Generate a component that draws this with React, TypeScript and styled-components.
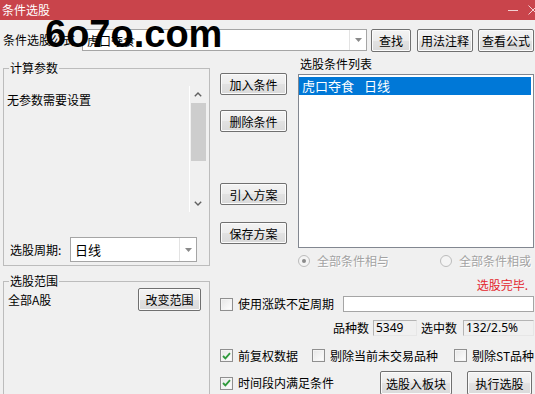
import React from "react";
import styled, { createGlobalStyle } from "styled-components";

const GlobalStyle = createGlobalStyle`
  html, body {
    margin: 0;
    padding: 0;
    background: #f0f0f0;
  }
  body {
    font-family: "Noto Sans CJK SC", "Noto Sans", sans-serif;
    font-size: 12px;
    color: #000;
  }
  * {
    box-sizing: border-box;
  }
`;

const Window = styled.div`
  position: relative;
  width: 535px;
  height: 394px;
  overflow: hidden;
  background: #f0f0f0;
`;

const TitleBar = styled.div`
  height: 20px;
  background: #c9444b;
  color: #fff;
  display: flex;
  align-items: center;
  padding-left: 2px;
  font-size: 12px;
`;

const TitleText = styled.span`
  flex: 1;
  line-height: 20px;
`;

const Minimize = styled.span`
  flex-shrink: 0;
  width: 10px;
  height: 1px;
  margin-right: 10px;
  background: rgba(255, 255, 255, 0.75);
`;

const CloseIcon = styled.svg`
  flex-shrink: 0;
  margin-right: -3px;
`;

const TopRow = styled.div`
  display: flex;
  align-items: center;
  height: 24px;
  margin-top: 8px;
  padding-left: 3px;
`;

const FormulaLabel = styled.span`
  width: 79px;
  line-height: 16px;
`;

const Combo = styled.div<{ $w: number; $h: number }>`
  width: ${(p) => p.$w}px;
  height: ${(p) => p.$h}px;
  display: flex;
  flex-shrink: 0;
  background: #fff;
  border: 1px solid #a5a5a5;
`;

const ComboText = styled.div<{ $size?: number }>`
  flex: 1;
  display: flex;
  align-items: center;
  padding-left: 4px;
  font-size: ${(p) => p.$size ?? 12}px;
`;

const ComboArrow = styled.div`
  width: 17px;
  display: flex;
  align-items: center;
  justify-content: center;
  border-left: 1px solid #e3e3e3;
`;

const Button = styled.button<{ $w: number; $h?: number; $mt?: number; $ml?: number }>`
  width: ${(p) => p.$w}px;
  height: ${(p) => p.$h ?? 22}px;
  margin-top: ${(p) => p.$mt ?? 0}px;
  margin-left: ${(p) => p.$ml ?? 0}px;
  flex-shrink: 0;
  padding: 0;
  font-family: inherit;
  font-size: 12px;
  color: #000;
  border: 1px solid #707070;
  border-radius: 2px;
  background: linear-gradient(#f3f3f3, #ececec 50%, #e2e2e2 51%, #dadada);
  box-shadow: inset 0 0 0 1px #fbfbfb;
`;

const Watermark = styled.div`
  position: absolute;
  left: 45px;
  top: 15px;
  font-family: "Liberation Sans", Arial, sans-serif;
  font-weight: bold;
  font-size: 38px;
  line-height: 38px;
  color: #000;
  pointer-events: none;
`;

const Body = styled.div`
  display: flex;
  margin-top: 4px;
`;

const LeftCol = styled.div`
  width: 207px;
  margin-left: 3px;
  display: flex;
  flex-direction: column;
  flex-shrink: 0;
`;

const GroupBox = styled.div<{ $mt: number; $h: number }>`
  margin-top: ${(p) => p.$mt}px;
  height: ${(p) => p.$h}px;
  border: 1px solid #bcbcbc;
  display: flex;
  flex-direction: column;
`;

const GroupTitle = styled.div`
  margin: -8px 0 0 5px;
  padding: 0 1px;
  width: fit-content;
  line-height: 14px;
  height: 14px;
  background: #f0f0f0;
`;

const ParamArea = styled.div`
  display: flex;
  height: 126px;
  margin: 11px 3px 0 0;
`;

const ParamText = styled.div`
  flex: 1;
  padding: 7px 3px;
  line-height: 14px;
`;

const ScrollBar = styled.div`
  width: 17px;
  display: flex;
  flex-direction: column;
  background: #f0f0f0;
  border-left: 1px solid #fff;
`;

const ScrollBtn = styled.div`
  height: 17px;
  display: flex;
  align-items: center;
  justify-content: center;
`;

const ScrollThumb = styled.div`
  height: 58px;
  margin: 0 0 0 1px;
  background: #cdcdcd;
`;

const ScrollTrack = styled.div`
  flex: 1;
`;

const PeriodRow = styled.div`
  display: flex;
  align-items: center;
  margin-top: 25px;
  padding-left: 6px;
`;

const PeriodLabel = styled.span`
  width: 60px;
`;

const RangeRow = styled.div`
  display: flex;
  align-items: center;
  justify-content: space-between;
  padding: 0 8px 0 4px;
`;

const RightArea = styled.div`
  width: 314px;
  margin-left: 10px;
  display: flex;
  flex-direction: column;
`;

const TopSection = styled.div`
  display: flex;
`;

const ButtonCol = styled.div`
  width: 67px;
  padding-top: 17px;
  display: flex;
  flex-direction: column;
`;

const ListCol = styled.div`
  width: 236px;
  margin-left: 11px;
  display: flex;
  flex-direction: column;
`;

const ListLabel = styled.div`
  margin-top: 1px;
  height: 14px;
  line-height: 14px;
  padding-left: 2px;
`;

const ListBox = styled.div`
  margin-top: 3px;
  height: 174px;
  background: #fff;
  border: 1px solid #828790;
  padding: 2px 2px 0 0;
`;

const ListItem = styled.div<{ $selected?: boolean }>`
  height: 18px;
  line-height: 18px;
  padding-left: 3px;
  font-size: 13px;
  background: ${(p) => (p.$selected ? "#0078d7" : "transparent")};
  color: ${(p) => (p.$selected ? "#fff" : "#000")};
`;

const Gap = styled.span<{ $w: number }>`
  display: inline-block;
  width: ${(p) => p.$w}px;
`;

const RadioRow = styled.div`
  margin-top: 6px;
  height: 14px;
  display: flex;
  justify-content: space-between;
  padding-right: 3px;
`;

const RadioOption = styled.label`
  display: flex;
  align-items: center;
  gap: 7px;
  color: #a3a3a3;
  text-shadow: 1px 1px 0 #fff;
  line-height: 14px;
`;

const RadioDot = styled.span<{ $on?: boolean }>`
  width: 12px;
  height: 12px;
  border-radius: 50%;
  border: 1px solid #bcbcbc;
  background: #f4f4f4;
  display: flex;
  align-items: center;
  justify-content: center;
  &::after {
    content: "";
    width: 4px;
    height: 4px;
    border-radius: 50%;
    background: ${(p) => (p.$on ? "#8a8a8a" : "transparent")};
  }
`;

const Status = styled.div`
  margin-top: 10px;
  height: 14px;
  line-height: 14px;
  text-align: right;
  padding-right: 6px;
  color: #e3262d;
`;

const Row = styled.div<{ $mt: number; $h: number; $end?: boolean }>`
  display: flex;
  align-items: center;
  margin-top: ${(p) => p.$mt}px;
  height: ${(p) => p.$h}px;
  justify-content: ${(p) => (p.$end ? "flex-end" : "flex-start")};
`;

const CheckItem = styled.label<{ $w?: number }>`
  display: flex;
  align-items: center;
  gap: 5px;
  flex-shrink: 0;
  width: ${(p) => (p.$w ? `${p.$w}px` : "auto")};
  line-height: 14px;
`;

const CheckBox = styled.span`
  width: 13px;
  height: 13px;
  border: 1px solid #8f8f8f;
  background: linear-gradient(135deg, #e6e6e6, #ffffff);
  box-shadow: inset 0 0 0 1px #f4f4f4;
  display: flex;
  align-items: center;
  justify-content: center;
`;

const TextInput = styled.div`
  flex: 1;
  height: 16px;
  margin-left: 9px;
  background: #fff;
  border: 1px solid #a5a5a5;
`;

const InfoLabel = styled.span<{ $ml?: number }>`
  margin-left: ${(p) => p.$ml ?? 0}px;
  line-height: 14px;
`;

const ReadBox = styled.div<{ $w: number; $ml: number }>`
  width: ${(p) => p.$w}px;
  height: 16px;
  margin-left: ${(p) => p.$ml}px;
  border: 1px solid #b4b4b4;
  border-right-color: #e6e6e6;
  border-bottom-color: #e6e6e6;
  padding-left: 2px;
  line-height: 14px;
  font-family: "Noto Sans", "Noto Sans CJK SC", sans-serif;
  font-size: 12px;
`;

const DownTriangle = () => (
  <svg width="7" height="4" viewBox="0 0 7 4">
    <path d="M0 0 L7 0 L3.5 4 Z" fill="#8a8a8a" />
  </svg>
);

const Chevron = ({ up }: { up?: boolean }) => (
  <svg width="8" height="5" viewBox="0 0 8 5">
    <path
      d={up ? "M0.8 4.3 L4 1.1 L7.2 4.3" : "M0.8 0.7 L4 3.9 L7.2 0.7"}
      fill="none"
      stroke="#606060"
      strokeWidth="1.4"
    />
  </svg>
);

const Check = ({ on }: { on?: boolean }) => (
  <CheckBox>
    {on && (
      <svg width="9" height="8" viewBox="0 0 9 8">
        <path d="M1 4 L3.4 6.4 L8 1.2" fill="none" stroke="#2f9a3c" strokeWidth="1.8" />
      </svg>
    )}
  </CheckBox>
);

export default function App() {
  return (
    <>
      <GlobalStyle />
      <Window>
        <TitleBar>
          <TitleText>条件选股</TitleText>
          <Minimize />
          <CloseIcon width="10" height="10" viewBox="0 0 10 10">
            <path d="M0.5 0.5 L9.5 9.5 M9.5 0.5 L0.5 9.5" stroke="rgba(255,255,255,0.75)" strokeWidth="1" />
          </CloseIcon>
        </TitleBar>

        <TopRow>
          <FormulaLabel>条件选股公式</FormulaLabel>
          <Combo $w={285} $h={22}>
            <ComboText>虎口夺食</ComboText>
            <ComboArrow>
              <DownTriangle />
            </ComboArrow>
          </Combo>
          <Button $w={40} $h={23} $ml={4}>查找</Button>
          <Button $w={56} $h={23} $ml={6}>用法注释</Button>
          <Button $w={56} $h={23} $ml={5}>查看公式</Button>
        </TopRow>

        <Body>
          <LeftCol>
            <GroupBox $mt={12} $h={198}>
              <GroupTitle>计算参数</GroupTitle>
              <ParamArea>
                <ParamText>无参数需要设置</ParamText>
                <ScrollBar>
                  <ScrollBtn>
                    <Chevron up />
                  </ScrollBtn>
                  <ScrollThumb />
                  <ScrollTrack />
                  <ScrollBtn>
                    <Chevron />
                  </ScrollBtn>
                </ScrollBar>
              </ParamArea>
              <PeriodRow>
                <PeriodLabel>选股周期:</PeriodLabel>
                <Combo $w={127} $h={25}>
                  <ComboText $size={13}>日线</ComboText>
                  <ComboArrow>
                    <DownTriangle />
                  </ComboArrow>
                </Combo>
              </PeriodRow>
            </GroupBox>

            <GroupBox $mt={15} $h={140}>
              <GroupTitle>选股范围</GroupTitle>
              <RangeRow>
                <span>全部A股</span>
                <Button $w={63} $h={23}>改变范围</Button>
              </RangeRow>
            </GroupBox>
          </LeftCol>

          <RightArea>
            <TopSection>
              <ButtonCol>
                <Button $w={67}>加入条件</Button>
                <Button $w={67} $mt={15}>删除条件</Button>
                <Button $w={67} $mt={51}>引入方案</Button>
                <Button $w={67} $mt={17}>保存方案</Button>
              </ButtonCol>
              <ListCol>
                <ListLabel>选股条件列表</ListLabel>
                <ListBox>
                  <ListItem $selected>
                    虎口夺食<Gap $w={10} />日线
                  </ListItem>
                </ListBox>
                <RadioRow>
                  <RadioOption>
                    <RadioDot $on />
                    全部条件相与
                  </RadioOption>
                  <RadioOption>
                    <RadioDot />
                    全部条件相或
                  </RadioOption>
                </RadioRow>
                <Status>选股完毕.</Status>
              </ListCol>
            </TopSection>

            <Row $mt={4} $h={16}>
              <CheckItem>
                <Check />
                使用涨跌不定周期
              </CheckItem>
              <TextInput />
            </Row>

            <Row $mt={8} $h={16} $end>
              <InfoLabel>品种数</InfoLabel>
              <ReadBox $w={44} $ml={4}>5349</ReadBox>
              <InfoLabel $ml={4}>选中数</InfoLabel>
              <ReadBox $w={71} $ml={6}>132/2.5%</ReadBox>
            </Row>

            <Row $mt={13} $h={13}>
              <CheckItem $w={92}>
                <Check on />
                前复权数据
              </CheckItem>
              <CheckItem $w={142}>
                <Check />
                剔除当前未交易品种
              </CheckItem>
              <CheckItem>
                <Check />
                剔除ST品种
              </CheckItem>
            </Row>

            <Row $mt={9} $h={24}>
              <CheckItem>
                <Check on />
                时间段内满足条件
              </CheckItem>
              <Button $w={72} $h={24} $ml={46}>选股入板块</Button>
              <Button $w={65} $h={24} $ml={15}>执行选股</Button>
            </Row>
          </RightArea>
        </Body>

        <Watermark>6o7o.com</Watermark>
      </Window>
    </>
  );
}
